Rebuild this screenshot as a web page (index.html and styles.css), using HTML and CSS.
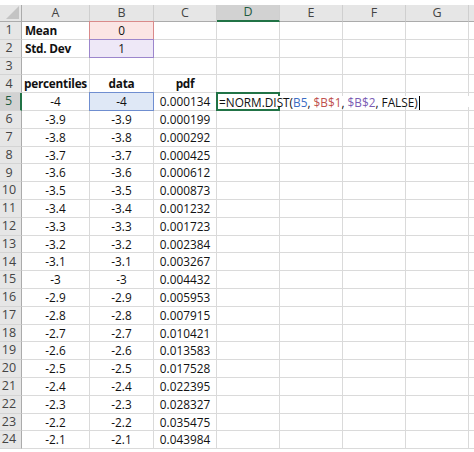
FILE: index.html
```
<!DOCTYPE html>
<html>
<head>
<meta charset="utf-8">
<link rel="stylesheet" href="styles.css">
</head>
<body>
<div class="sheet">
  <div class="corner"><span class="tri"></span></div>
  <div class="ch">A</div><div class="ch">B</div><div class="ch">C</div><div class="ch ch-active">D</div><div class="ch">E</div><div class="ch">F</div><div class="ch">G</div><div class="ch"></div>

  <div class="rh">1</div><div class="c left bold">Mean</div><div class="c ref-red">0</div><div class="c"></div><div class="c"></div><div class="c"></div><div class="c"></div><div class="c"></div><div class="c"></div>
  <div class="rh">2</div><div class="c left bold">Std. Dev</div><div class="c ref-purple">1</div><div class="c"></div><div class="c"></div><div class="c"></div><div class="c"></div><div class="c"></div><div class="c"></div>
  <div class="rh">3</div><div class="c"></div><div class="c"></div><div class="c"></div><div class="c"></div><div class="c"></div><div class="c"></div><div class="c"></div><div class="c"></div>
  <div class="rh">4</div><div class="c bold">percentiles</div><div class="c bold">data</div><div class="c bold">pdf</div><div class="c"></div><div class="c"></div><div class="c"></div><div class="c"></div><div class="c"></div>
  <div class="rh rh-active">5</div><div class="c">-4</div><div class="c ref-blue">-4</div><div class="c">0.000134</div><div class="c active"><span class="edit">=NORM.DIST(<span class="f-blue">B5</span>, <span class="f-red">$B$1</span>, <span class="f-purple">$B$2</span>, FALSE)<span class="caret"></span></span></div><div class="c"></div><div class="c"></div><div class="c"></div><div class="c"></div>
  <div class="rh">6</div><div class="c">-3.9</div><div class="c">-3.9</div><div class="c">0.000199</div><div class="c"></div><div class="c"></div><div class="c"></div><div class="c"></div><div class="c"></div>
  <div class="rh">7</div><div class="c">-3.8</div><div class="c">-3.8</div><div class="c">0.000292</div><div class="c"></div><div class="c"></div><div class="c"></div><div class="c"></div><div class="c"></div>
  <div class="rh">8</div><div class="c">-3.7</div><div class="c">-3.7</div><div class="c">0.000425</div><div class="c"></div><div class="c"></div><div class="c"></div><div class="c"></div><div class="c"></div>
  <div class="rh">9</div><div class="c">-3.6</div><div class="c">-3.6</div><div class="c">0.000612</div><div class="c"></div><div class="c"></div><div class="c"></div><div class="c"></div><div class="c"></div>
  <div class="rh">10</div><div class="c">-3.5</div><div class="c">-3.5</div><div class="c">0.000873</div><div class="c"></div><div class="c"></div><div class="c"></div><div class="c"></div><div class="c"></div>
  <div class="rh">11</div><div class="c">-3.4</div><div class="c">-3.4</div><div class="c">0.001232</div><div class="c"></div><div class="c"></div><div class="c"></div><div class="c"></div><div class="c"></div>
  <div class="rh">12</div><div class="c">-3.3</div><div class="c">-3.3</div><div class="c">0.001723</div><div class="c"></div><div class="c"></div><div class="c"></div><div class="c"></div><div class="c"></div>
  <div class="rh">13</div><div class="c">-3.2</div><div class="c">-3.2</div><div class="c">0.002384</div><div class="c"></div><div class="c"></div><div class="c"></div><div class="c"></div><div class="c"></div>
  <div class="rh">14</div><div class="c">-3.1</div><div class="c">-3.1</div><div class="c">0.003267</div><div class="c"></div><div class="c"></div><div class="c"></div><div class="c"></div><div class="c"></div>
  <div class="rh">15</div><div class="c">-3</div><div class="c">-3</div><div class="c">0.004432</div><div class="c"></div><div class="c"></div><div class="c"></div><div class="c"></div><div class="c"></div>
  <div class="rh">16</div><div class="c">-2.9</div><div class="c">-2.9</div><div class="c">0.005953</div><div class="c"></div><div class="c"></div><div class="c"></div><div class="c"></div><div class="c"></div>
  <div class="rh">17</div><div class="c">-2.8</div><div class="c">-2.8</div><div class="c">0.007915</div><div class="c"></div><div class="c"></div><div class="c"></div><div class="c"></div><div class="c"></div>
  <div class="rh">18</div><div class="c">-2.7</div><div class="c">-2.7</div><div class="c">0.010421</div><div class="c"></div><div class="c"></div><div class="c"></div><div class="c"></div><div class="c"></div>
  <div class="rh">19</div><div class="c">-2.6</div><div class="c">-2.6</div><div class="c">0.013583</div><div class="c"></div><div class="c"></div><div class="c"></div><div class="c"></div><div class="c"></div>
  <div class="rh">20</div><div class="c">-2.5</div><div class="c">-2.5</div><div class="c">0.017528</div><div class="c"></div><div class="c"></div><div class="c"></div><div class="c"></div><div class="c"></div>
  <div class="rh">21</div><div class="c">-2.4</div><div class="c">-2.4</div><div class="c">0.022395</div><div class="c"></div><div class="c"></div><div class="c"></div><div class="c"></div><div class="c"></div>
  <div class="rh">22</div><div class="c">-2.3</div><div class="c">-2.3</div><div class="c">0.028327</div><div class="c"></div><div class="c"></div><div class="c"></div><div class="c"></div><div class="c"></div>
  <div class="rh">23</div><div class="c">-2.2</div><div class="c">-2.2</div><div class="c">0.035475</div><div class="c"></div><div class="c"></div><div class="c"></div><div class="c"></div><div class="c"></div>
  <div class="rh">24</div><div class="c">-2.1</div><div class="c">-2.1</div><div class="c">0.043984</div><div class="c"></div><div class="c"></div><div class="c"></div><div class="c"></div><div class="c"></div>
</div>
</body>
</html>
```
FILE: styles.css
```
* { box-sizing: border-box; margin: 0; padding: 0; }
html, body { background: #fff; overflow: hidden; }
body {
  margin: 0;
  font-family: "Open Sans", "Noto Sans", sans-serif;
  font-size: 11.8px;
  color: #111;
}
.sheet {
  display: grid;
  grid-template-columns: 22px 68px 64px 63px 63px 63px 63px 63px 20px;
  grid-template-rows: 22px repeat(24, 17.8px);
  background: #fff;
}
.corner {
  position: relative;
  background: #e6e6e6;
  border-right: 1px solid #ababab;
  border-bottom: 1px solid #ababab;
  margin-top: 5px;
}
.tri {
  position: absolute;
  right: 2px;
  bottom: 2px;
  width: 0;
  height: 0;
  border-left: 13px solid transparent;
  border-bottom: 13px solid #c4c4c4;
}
.ch {
  margin-top: 5px;
  background: #e6e6e6;
  border-right: 1px solid #cfcfcf;
  border-bottom: 1px solid #ababab;
  display: flex;
  align-items: center;
  justify-content: center;
  color: #444;
  font-size: 12.5px;
  line-height: 1;
}
.ch-active {
  background: #d2d2d2;
  color: #1e5c3f;
  border-bottom: 2px solid #217346;
}
.rh {
  background: #e6e6e6;
  border-right: 1px solid #ababab;
  border-bottom: 1px solid #d4d4d4;
  display: flex;
  align-items: center;
  justify-content: center;
  padding-right: 3px;
  color: #444;
  font-size: 12.5px;
  line-height: 1;
}
.rh-active {
  background: #d2d2d2;
  color: #1e5c3f;
  border-right: 2px solid #217346;
}
.c {
  border-right: 1px solid #dadada;
  border-bottom: 1px solid #dadada;
  display: flex;
  align-items: center;
  justify-content: center;
  white-space: nowrap;
  line-height: 1;
  padding-top: 1px;
}
.left { justify-content: flex-start; padding-left: 3px; }
.bold { font-weight: 700; letter-spacing: -0.25px; }
.ref-red {
  background: #fbe5e4;
  border: 1px solid #d98a8a;
  margin: -1px 0 0 -1px;
}
.ref-purple {
  background: #eee8f7;
  border: 1px solid #9c86cc;
  margin: -1px 0 0 -1px;
}
.ref-blue {
  background: #dfe8f6;
  border: 1px solid #6f8ed0;
  margin: -1px 0 0 -1px;
}
.active {
  position: relative;
  justify-content: flex-start;
  overflow: visible;
  border: 2px solid #217346;
  margin: -1px 0 0 -1px;
}
.edit {
  position: absolute;
  left: 1px;
  top: 2px;
  bottom: 2px;
  width: 252px;
  background: #fff;
  display: block;
  line-height: 13px;
  padding-top: 0;
  white-space: pre;
  z-index: 2;
}
.f-blue { color: #3a6cc4; }
.f-red { color: #c0504d; }
.f-purple { color: #7b5cb3; }
.caret {
  display: inline-block;
  width: 1px;
  height: 14px;
  background: #000;
  margin-left: 1px;
  vertical-align: -3px;
}
```
